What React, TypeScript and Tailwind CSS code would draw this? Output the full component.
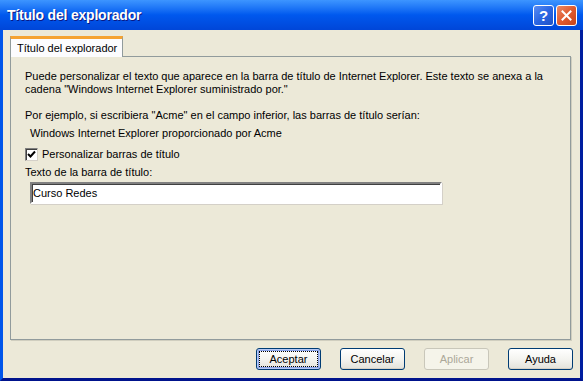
import { useState } from 'react'

const font = { fontFamily: '"Liberation Sans", Arial, sans-serif' }

function XpButton({ label, primary, disabled }: { label: string; primary?: boolean; disabled?: boolean }) {
  if (disabled) {
    return (
      <button
        disabled
        className="w-[65px] h-[22px] rounded-[3px] border border-[#c9c7ba] bg-[#f5f4ea] text-[11px] text-[#aca899]"
      >
        {label}
      </button>
    )
  }
  return (
    <button
      className={
        'w-[65px] h-[22px] rounded-[3px] border border-[#003c74] text-[11px] text-black bg-gradient-to-b from-[#ffffff] via-[#f4f4f0] to-[#e3e2da] flex items-center justify-center ' +
        (primary ? 'shadow-[inset_0_0_0_1px_#b8c9f5,inset_0_0_0_2px_#8aa3e8]' : 'shadow-[inset_0_-1px_0_#d6d0c5]')
      }
    >
      {primary ? (
        <span className="w-[59px] h-[16px] border border-dotted border-black flex items-center justify-center leading-none">
          {label}
        </span>
      ) : (
        label
      )}
    </button>
  )
}

export default function App() {
  const [checked, setChecked] = useState(true)
  const [value, setValue] = useState('Curso Redes')

  return (
    <div className="w-[583px] h-[381px] flex flex-col overflow-hidden" style={font}>
      {/* title bar */}
      <div className="h-[30px] shrink-0 flex items-center pl-[7px] pr-[6px] bg-gradient-to-b from-[#3d95ff] via-[#0058ee] to-[#0046d8]">
        <div className="flex-1 text-white font-bold text-[14px] tracking-[-0.2px] [text-shadow:1px_1px_0_#0a1883]">Título del explorador</div>
        <div className="flex gap-[2px] mt-[1px]">
          <div className="w-[21px] h-[21px] rounded-[3px] border border-white bg-gradient-to-br from-[#5a8cf2] via-[#2a66e3] to-[#1f52c6] flex items-center justify-center text-white font-bold text-[15px] leading-none">
            ?
          </div>
          <div className="w-[21px] h-[21px] rounded-[3px] border border-white bg-gradient-to-br from-[#e98a66] via-[#e05a2f] to-[#c6431c] flex items-center justify-center">
            <svg width="11" height="11" viewBox="0 0 11 11">
              <path d="M1.5 1.5 L9.5 9.5 M9.5 1.5 L1.5 9.5" stroke="white" strokeWidth="2" strokeLinecap="square" />
            </svg>
          </div>
        </div>
      </div>

      {/* client */}
      <div className="flex-1 flex flex-col bg-[#ece9d8] border-l-[3px] border-l-[#0055ea] border-r-[3px] border-r-[#001ea0] border-b-[3px] border-b-[#00138c] pl-[7px] pr-[9px] pt-[6px]">
        {/* tab */}
        <div className="flex">
          <div className="h-[21px] w-[113px] border-x border-[#919b9c] border-t-[3px] border-t-[#f5a332] bg-[#fcfcfe] text-[11px] flex items-center pl-[6px] -mb-px relative z-10">
            Título del explorador
          </div>
        </div>
        {/* panel */}
        <div className="h-[284px] border border-[#919b9c] shadow-[1px_1px_0_#d0cebf] px-[14px] pt-[13px] text-[11px] leading-[13px] text-black">
          <p className="whitespace-nowrap">
            Puede personalizar el texto que aparece en la barra de título de Internet Explorer. Este texto se anexa a la
            <br />
            cadena "Windows Internet Explorer suministrado por."
          </p>
          <p className="mt-[13px] whitespace-nowrap">
            Por ejemplo, si escribiera "Acme" en el campo inferior, las barras de título serían:
          </p>
          <p className="mt-[5px] ml-[5px] whitespace-nowrap">Windows Internet Explorer proporcionado por Acme</p>
          <label className="mt-[8px] flex items-center gap-[4px] w-fit">
            <span
              onClick={() => setChecked(!checked)}
              className="w-[13px] h-[13px] border border-t-[#808080] border-l-[#808080] border-b-[#d4d0c8] border-r-[#d4d0c8] bg-white flex items-center justify-center shadow-[inset_1px_1px_0_#404040]"
            >
              {checked && (
                <svg width="9" height="9" viewBox="0 0 9 9">
                  <path d="M1 4 L3.5 6.5 L8 1.5" stroke="black" strokeWidth="2" fill="none" />
                </svg>
              )}
            </span>
            Personalizar barras de título
          </label>
          <p className="mt-[5px] whitespace-nowrap">Texto de la barra de título:</p>
          <input
            value={value}
            onChange={(e) => setValue(e.target.value)}
            className="mt-[3px] ml-[5px] block w-[412px] h-[22px] bg-white border-2 border-t-[#808080] border-l-[#808080] border-b-[#ffffff] border-r-[#ffffff] shadow-[inset_1px_1px_0_#404040,1px_1px_0_#d4d0c8] px-[1px] text-[11px] outline-none"
            style={font}
          />
        </div>

        {/* buttons */}
        <div className="mt-[8px] flex justify-end gap-[19px] mr-[-2px]">
          <XpButton label="Aceptar" primary />
          <XpButton label="Cancelar" />
          <XpButton label="Aplicar" disabled />
          <XpButton label="Ayuda" />
        </div>
      </div>
    </div>
  )
}
